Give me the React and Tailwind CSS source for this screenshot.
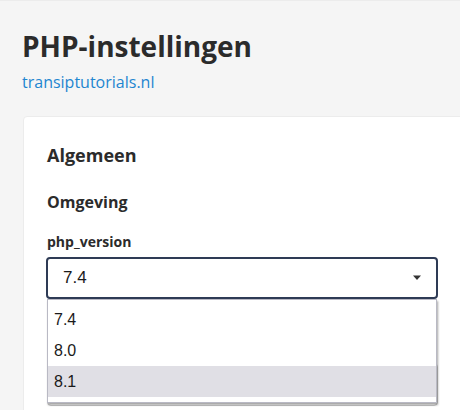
import React from "react";

/* DROPDOWN OPTIONS */
const versions = ["7.4", "8.0", "8.1"];

const App = () => {
  const active = "8.1";

  return (
    <div
      className="h-[410px] w-[460px] overflow-hidden bg-[#f5f5f5] border-t border-[#ececec] text-[#2b2b2b]"
      style={{ fontFamily: '"Open Sans", sans-serif' }}
    >
      <div className="pl-[22px] pt-[26px]">
        <h1 className="text-[28px] font-bold leading-[38px]">PHP-instellingen</h1>
        <a className="mt-[5px] block text-[16px] leading-[24px] text-[#1e86d0]" href="#">
          transiptutorials.nl
        </a>
      </div>

      {/* CARD */}
      <div className="ml-[23px] mt-[22px] -mr-[20px] rounded-tl-[4px] border border-[#ececec] bg-white pl-[23px] pt-[24px] pb-[40px]">
        <h2 className="text-[18px] font-bold leading-[28px]">Algemeen</h2>
        <h3 className="mt-[21px] text-[16px] font-bold leading-[24px]">Omgeving</h3>
        <label className="mt-[18px] block text-[14px] font-bold leading-[20px]">php_version</label>

        <div className="relative mt-[5px] w-[392px] -ml-[1px]">
          <div
            className="flex h-[42px] items-center justify-between rounded-[4px] border-2 border-[#2e3b55] bg-white pl-[15px] pr-[12px] text-[17px] text-[#1a1a1a]"
            style={{ fontFamily: '"Liberation Sans", Arial, sans-serif' }}
          >
            <span>7.4</span>
            <svg width="10" height="6" viewBox="0 0 10 6" className="mr-[2px]">
              <path d="M1 0.5 L9 0.5 L5 5 Z" fill="#333" />
            </svg>
          </div>

          {/* OPEN MENU */}
          <div
            className="absolute left-[1px] top-[42px] z-10 w-[390px] border border-[#b9b9c4] bg-white pb-[5px] shadow-[1px_2px_2px_rgba(0,0,0,0.35)]"
            style={{ fontFamily: '"Liberation Sans", Arial, sans-serif' }}
          >
            <div className="pt-[4px]">
              {versions.map((v) => (
                <div
                  key={v}
                  className={
                    "flex h-[31px] items-center pl-[6px] text-[16px] text-[#1a1a1a] " +
                    (v === active ? "bg-[#e0dfe5]" : "")
                  }
                >
                  {v}
                </div>
              ))}
            </div>
          </div>

          <div className="mt-[64px] ml-[1px] h-[43px] rounded-[4px] border border-[#c9c9c9] bg-white" />
        </div>
      </div>
    </div>
  );
};

export default App;
